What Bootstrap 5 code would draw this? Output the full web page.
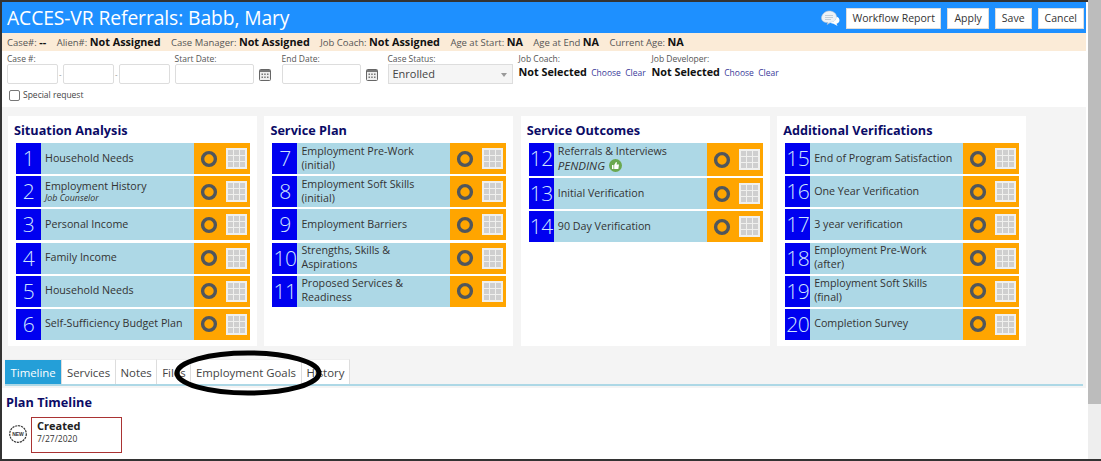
<!DOCTYPE html>
<html lang="en">
<head>
    <meta charset="UTF-8">
    <title>ACCES-VR Referrals</title>
    <meta name="viewport" content="width=device-width, initial-scale=1">
    <link href="https://cdn.jsdelivr.net/npm/bootstrap@5.3.2/dist/css/bootstrap.min.css" rel="stylesheet">
    <style>
        html, body { height: 461px; overflow: hidden; background: #fff; }
        body { font-family: "Open Sans", "Noto Sans", sans-serif; font-size: 11px; color: #333; }
        .frame { position: relative; height: 461px; border: solid #333; border-width: 2px 0 2px 2px; }
        .main-pane { width: 1084px; flex: none; margin-right: 2px; }
        .scroll-track { width: 13px; margin-top: -2px; background: #eee; }
        .scroll-thumb { height: 404px; background: #bcbcbc; }

        .head-bar { height: 31px; background: #1e90ff; padding: 5px 2px 4px 5px; }
        .head-title { font-size: 19.3px; line-height: 24px; color: #fff; letter-spacing: -.1px; }
        .head-btn { background: #fff; border: 1px solid #ddd; border-radius: 0; color: #333; font-size: 10.5px; line-height: 14px; padding: 2px 6px 3px; height: 21px; }
        .head-btn-wide { padding: 2px 5.5px 3px; }
        .btn-row { gap: 6px; }
        .chat-mark { margin-right: 6px; }
        .info-bar { height: 18px; background: #fbebd7; padding-left: 5px; font-size: 9.5px; line-height: 18px; color: #555; white-space: nowrap; }
        .info-bar b { font-size: 10.8px; color: #111; margin-right: 8px; }

        .form-strip { height: 56px; background: #fff; padding: 2px 5px 0; position: relative; }
        .field-label { font-size: 8.5px; line-height: 11px; color: #555; display: block; white-space: nowrap; }
        .field-box { height: 20px; border: 1px solid #ddd; border-radius: 2px; background: #fff; padding: 0; font-size: 11px; }
        .w-case { width: 50.5px; }
        .w-date { width: 79px; }
        .dash { width: 5.5px; text-align: center; font-size: 8px; color: #888; line-height: 20px; }
        .cell-start { margin-left: 5px; }
        .cell-end { margin-left: 11px; }
        .cell-status { margin-left: 10px; }
        .cell-coach { margin-left: 6px; width: 133px; }
        .cal-mark { margin-left: 5px; }
        .status-box { width: 125px; height: 20px; background: #f5f5f5; border: 1px solid #ddd; font-size: 11px; line-height: 17px; padding-left: 4px; color: #444; }
        .status-caret { border: 3px solid transparent; border-top: 4px solid #999; margin: 8px 5px 0 0; }
        .not-sel { font-size: 10.8px; font-weight: 700; color: #111; line-height: 15px; }
        .pick-link { font-size: 8.5px; color: #3a3a9a; text-decoration: none; margin-left: 1.5px; }
        .special-row { margin: 5px 0 0 2px; font-size: 8.5px; color: #444; line-height: 12px; }
        .special-row input { width: 11px; height: 11px; margin: 0 3px 0 0; border: 1px solid #777; border-radius: 2px; appearance: none; background: #fff; }

        .gray-pane { height: 281px; background: #f4f4f4; padding: 9px 3px 0 3px; }
        .board { gap: 7.4px; padding-left: 3px; height: 230px; }
        .plan-box { width: 249px; background: #fff; padding: 6px 7px 0 8px; }
        .plan-title { font-size: 12.7px; font-weight: 700; line-height: 17px; color: #0b0b66; margin: 0 0 4px -2px; white-space: nowrap; }
        .step-row { height: 31px; margin-bottom: 2.2px; background: #add8e6; }
        .step-row-tall { height: 33px; }
        .step-num { width: 25px; flex: none; align-self: stretch; background: #0000f0; color: #cfe6ff; font-size: 21px; font-weight: 300; line-height: 31px; text-align: center; letter-spacing: -.5px; }
        .step-text { padding: 0 0 2px 4px; font-size: 10.7px; line-height: 14px; color: #333; flex-grow: 1; min-width: 0; white-space: nowrap; }
        .step-sub { display: block; font-size: 8.8px; line-height: 10px; font-style: italic; color: #333; }
        .pending-note { font-style: italic; font-size: 11.5px; line-height: 15px; color: #333; }
        .step-act { width: 56px; flex: none; align-self: stretch; background: #ffa500; gap: 7px; padding-left: 5px; }

        .tab-list { margin: 13px 0 0 0; height: 27px; border-bottom: 2px solid #add8e6; flex-wrap: nowrap; }
        .tab-list .nav-link { height: 25px; padding: 0 4.7px; line-height: 25px; font-size: 11.4px; color: #444; background: #fff; border: 0; border-right: 1px solid #ddd; border-top: 1px solid #eee; border-radius: 0; margin: 0; }
        .tab-list .nav-link.active { background: #249fd8; color: #fff; padding: 0 5.5px; }
        .scribble { position: absolute; left: 170px; top: 347px; pointer-events: none; }

        .plan-foot { padding: 6px 0 0 4px; }
        .foot-title { font-size: 12.7px; font-weight: 700; line-height: 17px; color: #0b0b66; margin: 0 0 6px; }
        .new-mark { margin: 7px 3px 0 2px; }
        .event-box { width: 91px; height: 36px; border: 1px solid #a33; padding: 1px 5px; }
        .event-name { font-size: 11px; font-weight: 700; line-height: 14px; color: #222; }
        .event-date { font-size: 8.5px; line-height: 12px; color: #333; }
    </style>
</head>
<body>
<svg width="0" height="0" class="position-absolute">
    <symbol id="ring" viewBox="0 0 20 20">
        <circle cx="10" cy="10" r="6.4" fill="none" stroke="#50565c" stroke-width="3.4"/>
    </symbol>
    <symbol id="tbl" viewBox="0 0 21 21">
        <rect width="21" height="21" fill="#f0f0ee"/>
        <g fill="#cfcfcf">
            <rect x="2" y="2" width="5" height="5"/><rect x="8" y="2" width="5" height="5"/><rect x="14" y="2" width="5" height="5"/>
            <rect x="2" y="8" width="5" height="5"/><rect x="8" y="8" width="5" height="5"/><rect x="14" y="8" width="5" height="5"/>
            <rect x="2" y="14" width="5" height="5"/><rect x="8" y="14" width="5" height="5"/><rect x="14" y="14" width="5" height="5"/>
        </g>
    </symbol>
    <symbol id="cal" viewBox="0 0 12 13">
        <rect x=".5" y="1.5" width="11" height="11" rx="1" fill="#eee" stroke="#666"/>
        <rect x="1" y="2" width="10" height="2" fill="#777"/>
        <g fill="#777">
            <rect x="2.5" y="5.5" width="1.5" height="1.5"/><rect x="5.2" y="5.5" width="1.5" height="1.5"/><rect x="8" y="5.5" width="1.5" height="1.5"/>
            <rect x="2.5" y="8.5" width="1.5" height="1.5"/><rect x="5.2" y="8.5" width="1.5" height="1.5"/><rect x="8" y="8.5" width="1.5" height="1.5"/>
        </g>
    </symbol>
</svg>

<div class="frame d-flex">
    <div class="main-pane">
        <div class="head-bar d-flex align-items-center">
            <div class="head-title flex-grow-1">ACCES-VR Referrals: Babb, Mary</div>
            <svg width="19" height="17" viewBox="0 0 19 17" class="chat-mark">
                <path d="M7 12.5c-4 .2-6.500-1.600-6.500-4.500S3.500 1 8 1s7.500 2.500 7.500 6-3 5.200-6 5.400L6 14.500z" fill="#eef2f6" stroke="#b9c4cf" stroke-width=".6"/>
                <path d="M15.500 6.500c2 .8 3 2.200 3 3.800 0 1.800-1.300 3-3 3.400l1 2.300-4-2.300c-1.500 0-3-.5-3.500-1.400 3.500 0 6.500-2 6.500-5.800z" fill="#fff"/>
                <path d="M4 5.500h8M4 7.500h8M4 9.500h6" stroke="#b9c4cf" stroke-width=".8"/>
            </svg>
            <div class="d-flex btn-row">
                <button class="head-btn head-btn-wide" type="button">Workflow Report</button>
                <button class="head-btn" type="button">Apply</button>
                <button class="head-btn" type="button">Save</button>
                <button class="head-btn" type="button">Cancel</button>
            </div>
        </div>

        <div class="info-bar">Case#: <b>--</b> Alien#: <b>Not Assigned</b> Case Manager: <b>Not Assigned</b> Job Coach: <b>Not Assigned</b> Age at Start: <b>NA</b> Age at End <b>NA</b> Current Age: <b>NA</b></div>

        <div class="form-strip">
            <div class="d-flex">
                <div>
                    <span class="field-label">Case #:</span>
                    <div class="d-flex">
                        <input class="field-box w-case" type="text"><span class="dash">-</span>
                        <input class="field-box w-case" type="text"><span class="dash">-</span>
                        <input class="field-box w-case" type="text">
                    </div>
                </div>
                <div class="cell-start">
                    <span class="field-label">Start Date:</span>
                    <div class="d-flex align-items-center">
                        <input class="field-box w-date" type="text">
                        <svg width="12" height="13" class="cal-mark"><use href="#cal"/></svg>
                    </div>
                </div>
                <div class="cell-end">
                    <span class="field-label">End Date:</span>
                    <div class="d-flex align-items-center">
                        <input class="field-box w-date" type="text">
                        <svg width="12" height="13" class="cal-mark"><use href="#cal"/></svg>
                    </div>
                </div>
                <div class="cell-status">
                    <span class="field-label">Case Status:</span>
                    <div class="status-box d-flex justify-content-between"><span>Enrolled</span><span class="status-caret"></span></div>
                </div>
                <div class="cell-coach">
                    <span class="field-label">Job Coach:</span>
                    <div class="text-nowrap"><span class="not-sel">Not Selected</span> <a class="pick-link" href="#">Choose</a> <a class="pick-link" href="#">Clear</a></div>
                </div>
                <div>
                    <span class="field-label">Job Developer:</span>
                    <div class="text-nowrap"><span class="not-sel">Not Selected</span> <a class="pick-link" href="#">Choose</a> <a class="pick-link" href="#">Clear</a></div>
                </div>
            </div>
            <label class="special-row d-flex align-items-center"><input type="checkbox">Special request</label>
        </div>

        <div class="gray-pane">
            <div class="board d-flex">
                <div class="plan-box">
                    <h6 class="plan-title">Situation Analysis</h6>
                    <div class="step-row d-flex align-items-center"><div class="step-num">1</div><div class="step-text">Household Needs</div><div class="step-act d-flex align-items-center"><svg width="20" height="20"><use href="#ring"/></svg><svg width="21" height="21"><use href="#tbl"/></svg></div></div>
                    <div class="step-row d-flex align-items-center"><div class="step-num">2</div><div class="step-text">Employment History<span class="step-sub">Job Counselor</span></div><div class="step-act d-flex align-items-center"><svg width="20" height="20"><use href="#ring"/></svg><svg width="21" height="21"><use href="#tbl"/></svg></div></div>
                    <div class="step-row d-flex align-items-center"><div class="step-num">3</div><div class="step-text">Personal Income</div><div class="step-act d-flex align-items-center"><svg width="20" height="20"><use href="#ring"/></svg><svg width="21" height="21"><use href="#tbl"/></svg></div></div>
                    <div class="step-row d-flex align-items-center"><div class="step-num">4</div><div class="step-text">Family Income</div><div class="step-act d-flex align-items-center"><svg width="20" height="20"><use href="#ring"/></svg><svg width="21" height="21"><use href="#tbl"/></svg></div></div>
                    <div class="step-row d-flex align-items-center"><div class="step-num">5</div><div class="step-text">Household Needs</div><div class="step-act d-flex align-items-center"><svg width="20" height="20"><use href="#ring"/></svg><svg width="21" height="21"><use href="#tbl"/></svg></div></div>
                    <div class="step-row d-flex align-items-center"><div class="step-num">6</div><div class="step-text">Self-Sufficiency Budget Plan</div><div class="step-act d-flex align-items-center"><svg width="20" height="20"><use href="#ring"/></svg><svg width="21" height="21"><use href="#tbl"/></svg></div></div>
                </div>
                <div class="plan-box">
                    <h6 class="plan-title">Service Plan</h6>
                    <div class="step-row d-flex align-items-center"><div class="step-num">7</div><div class="step-text">Employment Pre-Work<br>(initial)</div><div class="step-act d-flex align-items-center"><svg width="20" height="20"><use href="#ring"/></svg><svg width="21" height="21"><use href="#tbl"/></svg></div></div>
                    <div class="step-row d-flex align-items-center"><div class="step-num">8</div><div class="step-text">Employment Soft Skills<br>(initial)</div><div class="step-act d-flex align-items-center"><svg width="20" height="20"><use href="#ring"/></svg><svg width="21" height="21"><use href="#tbl"/></svg></div></div>
                    <div class="step-row d-flex align-items-center"><div class="step-num">9</div><div class="step-text">Employment Barriers</div><div class="step-act d-flex align-items-center"><svg width="20" height="20"><use href="#ring"/></svg><svg width="21" height="21"><use href="#tbl"/></svg></div></div>
                    <div class="step-row d-flex align-items-center"><div class="step-num">10</div><div class="step-text">Strengths, Skills &amp;<br>Aspirations</div><div class="step-act d-flex align-items-center"><svg width="20" height="20"><use href="#ring"/></svg><svg width="21" height="21"><use href="#tbl"/></svg></div></div>
                    <div class="step-row d-flex align-items-center"><div class="step-num">11</div><div class="step-text">Proposed Services &amp;<br>Readiness</div><div class="step-act d-flex align-items-center"><svg width="20" height="20"><use href="#ring"/></svg><svg width="21" height="21"><use href="#tbl"/></svg></div></div>
                </div>
                <div class="plan-box">
                    <h6 class="plan-title">Service Outcomes</h6>
                    <div class="step-row step-row-tall d-flex align-items-center"><div class="step-num">12</div><div class="step-text">Referrals &amp; Interviews<div class="pending-note d-flex align-items-center">PENDING
                        <svg width="13" height="13" viewBox="0 0 13 13" class="ms-1"><circle cx="6.500" cy="6.500" r="6.500" fill="#6aa84f"/><path d="M3 6h1.500v4H3zM5.200 6l1.800-3c.8 0 1 .6.800 1.500L7.500 5.500H10l-.7 4.500H5.200z" fill="#fff"/></svg></div></div><div class="step-act d-flex align-items-center"><svg width="20" height="20"><use href="#ring"/></svg><svg width="21" height="21"><use href="#tbl"/></svg></div></div>
                    <div class="step-row d-flex align-items-center"><div class="step-num">13</div><div class="step-text">Initial Verification</div><div class="step-act d-flex align-items-center"><svg width="20" height="20"><use href="#ring"/></svg><svg width="21" height="21"><use href="#tbl"/></svg></div></div>
                    <div class="step-row d-flex align-items-center"><div class="step-num">14</div><div class="step-text">90 Day Verification</div><div class="step-act d-flex align-items-center"><svg width="20" height="20"><use href="#ring"/></svg><svg width="21" height="21"><use href="#tbl"/></svg></div></div>
                </div>
                <div class="plan-box">
                    <h6 class="plan-title">Additional Verifications</h6>
                    <div class="step-row d-flex align-items-center"><div class="step-num">15</div><div class="step-text">End of Program Satisfaction</div><div class="step-act d-flex align-items-center"><svg width="20" height="20"><use href="#ring"/></svg><svg width="21" height="21"><use href="#tbl"/></svg></div></div>
                    <div class="step-row d-flex align-items-center"><div class="step-num">16</div><div class="step-text">One Year Verification</div><div class="step-act d-flex align-items-center"><svg width="20" height="20"><use href="#ring"/></svg><svg width="21" height="21"><use href="#tbl"/></svg></div></div>
                    <div class="step-row d-flex align-items-center"><div class="step-num">17</div><div class="step-text">3 year verification</div><div class="step-act d-flex align-items-center"><svg width="20" height="20"><use href="#ring"/></svg><svg width="21" height="21"><use href="#tbl"/></svg></div></div>
                    <div class="step-row d-flex align-items-center"><div class="step-num">18</div><div class="step-text">Employment Pre-Work<br>(after)</div><div class="step-act d-flex align-items-center"><svg width="20" height="20"><use href="#ring"/></svg><svg width="21" height="21"><use href="#tbl"/></svg></div></div>
                    <div class="step-row d-flex align-items-center"><div class="step-num">19</div><div class="step-text">Employment Soft Skills<br>(final)</div><div class="step-act d-flex align-items-center"><svg width="20" height="20"><use href="#ring"/></svg><svg width="21" height="21"><use href="#tbl"/></svg></div></div>
                    <div class="step-row d-flex align-items-center"><div class="step-num">20</div><div class="step-text">Completion Survey</div><div class="step-act d-flex align-items-center"><svg width="20" height="20"><use href="#ring"/></svg><svg width="21" height="21"><use href="#tbl"/></svg></div></div>
                </div>
            </div>
            <ul class="nav tab-list">
                <li class="nav-item"><a class="nav-link active" href="#">Timeline</a></li>
                <li class="nav-item"><a class="nav-link" href="#">Services</a></li>
                <li class="nav-item"><a class="nav-link" href="#">Notes</a></li>
                <li class="nav-item"><a class="nav-link" href="#">Files</a></li>
                <li class="nav-item"><a class="nav-link" href="#">Employment Goals</a></li>
                <li class="nav-item"><a class="nav-link" href="#">History</a></li>
            </ul>
        </div>

        <div class="plan-foot">
            <h6 class="foot-title">Plan Timeline</h6>
            <div class="d-flex">
                <svg class="new-mark" width="20" height="20" viewBox="0 0 20 20">
                    <circle cx="10" cy="10" r="8.300" fill="#fff" stroke="#333" stroke-width="1.200" stroke-dasharray="2.200 .8"/>
                    <text x="10" y="12" text-anchor="middle" font-size="5" font-weight="700" fill="#333" font-family="Liberation Sans, sans-serif">NEW</text>
                </svg>
                <div class="event-box">
                    <div class="event-name">Created</div>
                    <div class="event-date">7/27/2020</div>
                </div>
            </div>
        </div>
    </div>
    <div class="scroll-track"><div class="scroll-thumb"></div></div>

    <svg class="scribble" width="156" height="52" viewBox="0 0 156 52">
        <ellipse cx="76" cy="24" rx="71" ry="20" fill="none" stroke="#000" stroke-width="5"/>
    </svg>
</div>
<script src="https://cdn.jsdelivr.net/npm/bootstrap@5.3.2/dist/js/bootstrap.bundle.min.js"></script>
</body>
</html>
